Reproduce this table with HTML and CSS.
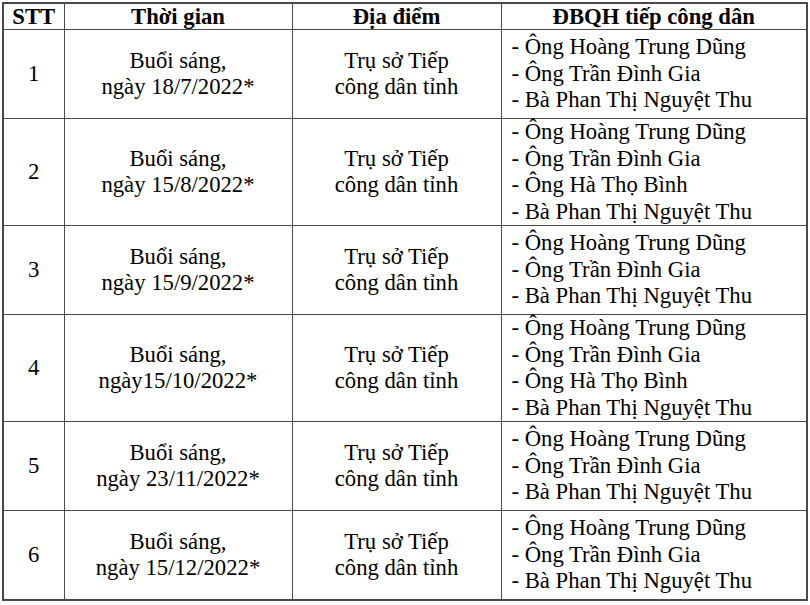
FILE: index.html
```html
<!DOCTYPE html>
<html lang="vi">
<head>
<meta charset="utf-8">
<title>Lịch tiếp công dân</title>
<link rel="stylesheet" href="styles.css">
</head>
<body>
<table class="schedule">
  <colgroup>
    <col class="c-stt">
    <col class="c-time">
    <col class="c-place">
    <col class="c-people">
  </colgroup>
  <thead>
    <tr class="head">
      <th>STT</th>
      <th>Thời gian</th>
      <th>Địa điểm</th>
      <th>ĐBQH tiếp công dân</th>
    </tr>
  </thead>
  <tbody>
    <tr class="row">
      <td class="num">1</td>
      <td class="center">Buổi sáng,<br>ngày 18/7/2022*</td>
      <td class="center">Trụ sở Tiếp<br>công dân tỉnh</td>
      <td class="people">
        <div>- Ông Hoàng Trung Dũng</div>
        <div>- Ông Trần Đình Gia</div>
        <div>- Bà Phan Thị Nguyệt Thu</div>
      </td>
    </tr>
    <tr class="row">
      <td class="num">2</td>
      <td class="center">Buổi sáng,<br>ngày 15/8/2022*</td>
      <td class="center">Trụ sở Tiếp<br>công dân tỉnh</td>
      <td class="people">
        <div>- Ông Hoàng Trung Dũng</div>
        <div>- Ông Trần Đình Gia</div>
        <div>- Ông Hà Thọ Bình</div>
        <div>- Bà Phan Thị Nguyệt Thu</div>
      </td>
    </tr>
    <tr class="row">
      <td class="num">3</td>
      <td class="center">Buổi sáng,<br>ngày 15/9/2022*</td>
      <td class="center">Trụ sở Tiếp<br>công dân tỉnh</td>
      <td class="people">
        <div>- Ông Hoàng Trung Dũng</div>
        <div>- Ông Trần Đình Gia</div>
        <div>- Bà Phan Thị Nguyệt Thu</div>
      </td>
    </tr>
    <tr class="row">
      <td class="num">4</td>
      <td class="center">Buổi sáng,<br>ngày15/10/2022*</td>
      <td class="center">Trụ sở Tiếp<br>công dân tỉnh</td>
      <td class="people">
        <div>- Ông Hoàng Trung Dũng</div>
        <div>- Ông Trần Đình Gia</div>
        <div>- Ông Hà Thọ Bình</div>
        <div>- Bà Phan Thị Nguyệt Thu</div>
      </td>
    </tr>
    <tr class="row">
      <td class="num">5</td>
      <td class="center">Buổi sáng,<br>ngày 23/11/2022*</td>
      <td class="center">Trụ sở Tiếp<br>công dân tỉnh</td>
      <td class="people">
        <div>- Ông Hoàng Trung Dũng</div>
        <div>- Ông Trần Đình Gia</div>
        <div>- Bà Phan Thị Nguyệt Thu</div>
      </td>
    </tr>
    <tr class="row">
      <td class="num">6</td>
      <td class="center">Buổi sáng,<br>ngày 15/12/2022*</td>
      <td class="center">Trụ sở Tiếp<br>công dân tỉnh</td>
      <td class="people">
        <div>- Ông Hoàng Trung Dũng</div>
        <div>- Ông Trần Đình Gia</div>
        <div>- Bà Phan Thị Nguyệt Thu</div>
      </td>
    </tr>
  </tbody>
</table>
</body>
</html>
```
FILE: styles.css
```css
html, body {
  margin: 0;
  padding: 0;
  background: #ffffff;
}

body {
  padding: 2px 0 0 2px;
  font-family: "Liberation Serif", "Times New Roman", serif;
  color: #000000;
}

.schedule {
  border-collapse: collapse;
  table-layout: fixed;
  width: 804px;
  border: 2px solid #4a4a4a;
  font-size: 22.7px;
  line-height: 26.5px;
}

.c-stt { width: 61px; }
.c-time { width: 228px; }
.c-place { width: 209px; }
.c-people { width: 306px; }

.schedule th,
.schedule td {
  border: 1px solid #4a4a4a;
  padding: 0;
  vertical-align: middle;
}

.head th {
  height: 25px;
  line-height: 25px;
  font-weight: bold;
  text-align: center;
}

.row td {
  height: 88px;
}

.num,
.center {
  text-align: center;
}

.people {
  text-align: left;
  padding-left: 10px !important;
}
```
